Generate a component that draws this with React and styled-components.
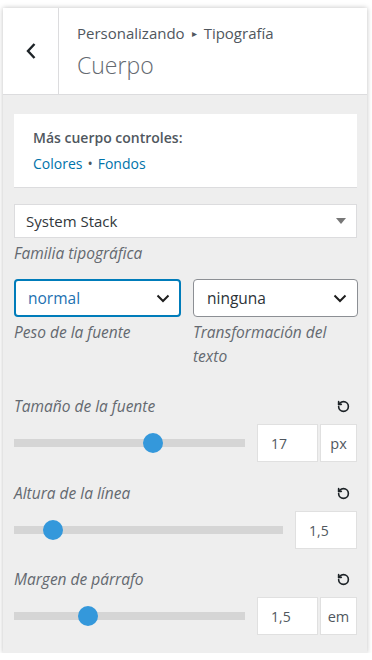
import styled, { createGlobalStyle } from "styled-components";
import { RotateCcw } from "lucide-react";

const GlobalStyle = createGlobalStyle`
  body {
    margin: 0;
    background: #fff;
    font-family: "Open Sans", "Noto Sans", sans-serif;
  }
`;

const Panel = styled.div`
  width: 364px;
  height: 645px;
  margin: 8px 0 0 3px;
  background: #eeeeee;
  box-shadow: 0 0 5px rgba(0, 0, 0, 0.25);
  display: flex;
  flex-direction: column;
`;

const Header = styled.div`
  height: 86px;
  display: flex;
  background: #fff;
  border-bottom: 1px solid #dcdcde;
`;

const BackButton = styled.div`
  width: 55px;
  border-right: 1px solid #dcdcde;
  display: flex;
  align-items: center;
  justify-content: center;
  color: #1d2327;
`;

const TitleBox = styled.div`
  padding: 13px 0 0 18px;
  display: flex;
  flex-direction: column;
`;

const Crumb = styled.div`
  font-size: 15px;
  color: #50575e;
  line-height: 24px;
  span {
    font-size: 10px;
    margin: 0 7px;
    position: relative;
    top: -2px;
  }
`;

const Title = styled.div`
  font-size: 23px;
  font-weight: 300;
  color: #646970;
  line-height: 32px;
  margin-top: 2px;
`;

const Content = styled.div`
  padding: 19px 10px 0 11px;
  display: flex;
  flex-direction: column;
`;

const InfoBox = styled.div`
  background: #fff;
  height: 74px;
  box-sizing: border-box;
  padding: 12px 19px;
  border-bottom: 1px solid #dcdcde;
`;

const InfoTitle = styled.div`
  font-size: 14px;
  font-weight: 600;
  color: #50575e;
  line-height: 24px;
`;

const Links = styled.div`
  font-size: 14px;
  line-height: 28px;
  color: #50575e;
  a {
    color: #0073aa;
    text-decoration: none;
  }
  b {
    font-weight: 400;
    margin: 0 5px;
  }
`;

const FontSelect = styled.div`
  margin-top: 16px;
  height: 34px;
  box-sizing: border-box;
  background: #fff;
  border: 1px solid #dcdcde;
  display: flex;
  align-items: center;
  justify-content: space-between;
  padding: 0 10px 0 11px;
  font-size: 15px;
  color: #32373c;
`;

const Triangle = styled.div`
  width: 0;
  height: 0;
  border-left: 5px solid transparent;
  border-right: 5px solid transparent;
  border-top: 6px solid #777;
`;

const Caption = styled.div`
  font-size: 15.5px;
  font-style: italic;
  color: #646970;
  line-height: 24px;
  margin-top: ${(p) => p.$top ?? 3}px;
`;

const Pair = styled.div`
  display: grid;
  grid-template-columns: 167px 165px;
  gap: 12px;
  margin-top: 14px;
`;

const Dropdown = styled.div`
  height: 38px;
  box-sizing: border-box;
  background: #fff;
  border: ${(p) => (p.$focus ? "2px solid #007cba" : "1px solid #8c8f94")};
  border-radius: 4px;
  display: flex;
  align-items: center;
  justify-content: space-between;
  padding: 0 ${(p) => (p.$focus ? 9 : 10)}px 0 ${(p) => (p.$focus ? 12 : 13)}px;
  font-size: 15.5px;
  color: ${(p) => (p.$focus ? "#2271b1" : "#2c3338")};
`;

const SliderBlock = styled.div`
  margin-top: ${(p) => p.$top}px;
`;

const SliderHead = styled.div`
  display: flex;
  justify-content: space-between;
  align-items: center;
  padding-right: 7px;
  color: #1d2327;
`;

const SliderRow = styled.div`
  display: flex;
  align-items: center;
  margin-top: 6px;
`;

const Track = styled.div`
  position: relative;
  width: ${(p) => p.$w}px;
  height: 8px;
  background: #d5d5d5;
`;

const Thumb = styled.div`
  position: absolute;
  top: -6px;
  width: 20px;
  height: 20px;
  border-radius: 50%;
  background: #3498db;
`;

const NumberBox = styled.div`
  margin-left: auto;
  width: ${(p) => p.$w}px;
  height: 38px;
  box-sizing: border-box;
  background: #fff;
  border: 1px solid #e0e0e0;
  display: flex;
  align-items: center;
  padding-left: 13px;
  font-size: 14px;
  color: #50575e;
`;

const Unit = styled.div`
  width: 37px;
  height: 38px;
  box-sizing: border-box;
  margin-left: 2px;
  background: #fff;
  border: 1px solid #e0e0e0;
  display: flex;
  align-items: center;
  justify-content: center;
  font-size: 14.5px;
  color: #50575e;
`;

const Chevron = () => (
  <svg width="14" height="9" viewBox="0 0 14 9" fill="none">
    <path d="M1.5 1.5 L7 7 L12.5 1.5" stroke="#1e1e1e" strokeWidth="2" />
  </svg>
);

const Slider = ({ label, top, track, pos, value, unit, boxW }) => (
  <SliderBlock $top={top}>
    <SliderHead>
      <Caption $top={0}>{label}</Caption>
      <RotateCcw size={13} strokeWidth={3} />
    </SliderHead>
    <SliderRow>
      <Track $w={track}>
        <Thumb style={{ left: pos - 10 }} />
      </Track>
      <NumberBox $w={boxW}>{value}</NumberBox>
      {unit && <Unit>{unit}</Unit>}
    </SliderRow>
  </SliderBlock>
);

export default function App() {
  return (
    <>
      <GlobalStyle />
      <Panel>
        <Header>
          <BackButton>
            <svg width="12" height="18" viewBox="0 0 12 18" fill="none">
              <path d="M9.5 2 L3 9 L9.5 16" stroke="#1d2327" strokeWidth="2.4" />
            </svg>
          </BackButton>
          <TitleBox>
            <Crumb>
              Personalizando<span>▸</span>Tipografía
            </Crumb>
            <Title>Cuerpo</Title>
          </TitleBox>
        </Header>
        <Content>
          <InfoBox>
            <InfoTitle>Más cuerpo controles:</InfoTitle>
            <Links>
              <a href="#">Colores</a>
              <b>•</b>
              <a href="#">Fondos</a>
            </Links>
          </InfoBox>
          <FontSelect>
            System Stack
            <Triangle />
          </FontSelect>
          <Caption>Familia tipográfica</Caption>
          <Pair>
            <div>
              <Dropdown $focus>
                normal
                <Chevron />
              </Dropdown>
              <Caption $top={3}>Peso de la fuente</Caption>
            </div>
            <div>
              <Dropdown>
                ninguna
                <Chevron />
              </Dropdown>
              <Caption $top={3}>Transformación del texto</Caption>
            </div>
          </Pair>
          <Slider label="Tamaño de la fuente" top={26} track={231} pos={139} value="17" unit="px" boxW={61} />
          <Slider label="Altura de la línea" top={19} track={269} pos={39} value="1,5" boxW={62} />
          <Slider label="Margen de párrafo" top={18} track={231} pos={74} value="1,5" unit="em" boxW={61} />
        </Content>
      </Panel>
    </>
  );
}
